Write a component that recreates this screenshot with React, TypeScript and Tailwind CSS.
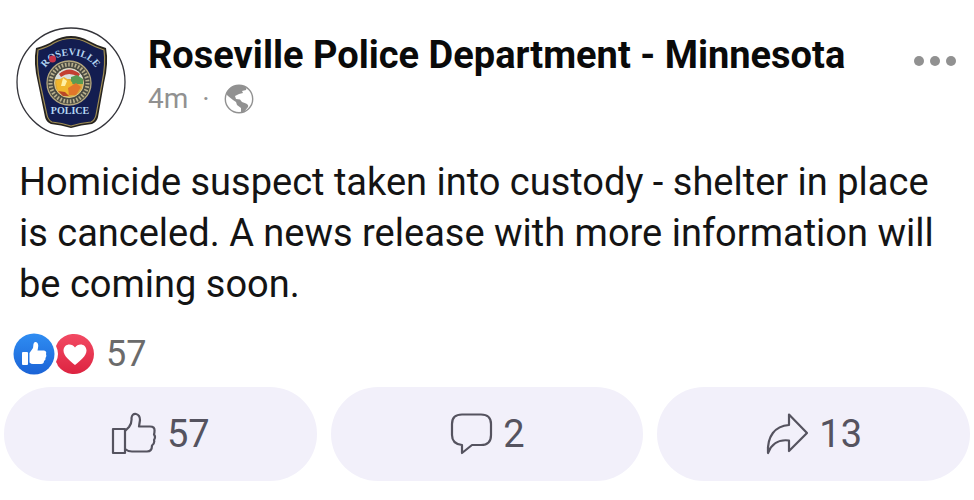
import type { ReactNode } from "react"

const Avatar = () => {
    return <svg viewBox="0 0 110 110" className="size-[110px] shrink-0" role="img" aria-label="Roseville Police badge">
        <defs>
            <path id="arch" d="M27 47C33 22 76 22 82 47" />
        </defs>
        <circle cx="55" cy="55" r="54" fill="#fff" stroke="#34343a" strokeWidth="1.3" />
        <path d="M20 21Q31 18 37 14Q55 4 73 14Q80 18 90 21Q93 36 88 56L82 90Q81 95 76 97Q65 98 55 101Q45 98 35 97Q30 95 29 90L22 56Q17 36 20 21Z" fill="#26231f" />
        <path d="M22 23Q32 20 38 16Q55 7 72 16Q79 20 88 23Q90 37 86 56L80 88Q79 93 75 95Q64 96 55 99Q46 96 36 95Q32 93 31 88L24 56Q20 37 22 23Z" fill="#131d50" stroke="#a08e56" strokeWidth="1.2" />
        <text className="font-['Liberation_Serif',serif] text-[10px] font-bold" fill="#b4d6f2">
            <textPath href="#arch" startOffset="50%" textAnchor="middle">ROSEVILLE</textPath>
        </text>
        <circle cx="36.500" cy="32" r="3.500" fill="#c9344a" />
        <circle cx="53" cy="56" r="22" fill="#4a4b43" stroke="#b5a87e" strokeWidth="1.3" />
        <circle cx="53" cy="56" r="18.5" fill="none" stroke="#b9b08d" strokeWidth="4" strokeDasharray="1.6 1.7" />
        <circle cx="53" cy="56" r="14.5" fill="#d9a83c" stroke="#d8c894" strokeWidth="1" />
        <path d="M39 52a14.500 14.500 0 0 1 28 0Z" fill="#d9dfdc" />
        <path d="M43 47q10-9 21 0l-2 3q-9-6-17 0Z" fill="#c43f32" />
        <path d="M55 50l6-2 6 4v5l-12 0Z" fill="#5b9b52" />
        <path d="M40 54l8-4 8 5 2 8-7 5-9-3Z" fill="#f0b62d" />
        <path d="M47 51l4 3-2 5-4 0Z" fill="#fff0a4" />
        <path d="M52 61l8-5 5 4-5 8h-7Z" fill="#e2762b" />
        <path d="M42 64l7 1 4 4-6 0Z" fill="#b94827" />
        <text x="54" y="87" textAnchor="middle" className="font-['Liberation_Serif',serif] text-[10px] font-bold" fill="#b4d6f2">POLICE</text>
    </svg>
}

const Globe = () => {
    return <svg viewBox="0 0 30 30" className="size-[30px]" role="img" aria-label="Public">
        <circle cx="15" cy="15" r="13.700" fill="#fff" stroke="#919191" strokeWidth="1.400" />
        <path d="M2 10Q5 3 12 1.500L20 2Q23 4 22 6L18 7L19 9L15 10L11 12L12 15L16 15.500L18 18L22 19.500Q25 21 24 23L20 28L17 28.500L17 24L13 21L12 18L9 16L4 12Z" fill="#919191" />
    </svg>
}

const LikeBadge = () => {
    return <svg viewBox="0 0 42 42" className="size-[42px]" role="img" aria-label="Like">
        <defs>
            <linearGradient id="blue" x1="0" y1="0" x2="0" y2="1">
                <stop offset="0" stopColor="#2f8df2" />
                <stop offset="1" stopColor="#1b63d6" />
            </linearGradient>
        </defs>
        <circle cx="21" cy="21" r="20.500" fill="url(#blue)" />
        <rect x="9" y="19" width="6" height="13" rx="1" fill="#fff" />
        <path d="M16.500 20L20 15L20.500 11Q21 8.500 23 9Q26 10 25 15L24.500 17.500H31Q34 18 33 21Q34 23 32.500 25Q33 27 31 28Q31 31 28 31H20Q18 31 16.500 29.500Z" fill="#fff" />
    </svg>
}

const LoveBadge = () => {
    return <svg viewBox="0 0 42 42" className="-ml-px size-[42px]" role="img" aria-label="Love">
        <defs>
            <linearGradient id="red" x1="0" y1="0" x2="0" y2="1">
                <stop offset="0" stopColor="#f24a63" />
                <stop offset="1" stopColor="#dd2441" />
            </linearGradient>
        </defs>
        <path d="M4 9A20 20 0 1 1 4 33Q3 30 2 29Q4 25 4 21Q4 17 2 13Z" fill="url(#red)" />
        <path d="M21 32C16 28 9.500 23 9.500 17.500C9.500 10.500 18 9.500 21 14.500C24 9.500 32.500 10.500 32.500 17.500C32.500 23 26 28 21 32Z" fill="#fff" />
    </svg>
}

const ThumbIcon = () => {
    return <svg viewBox="0 0 46 44" className="h-11 w-[46px]" fill="none" stroke="#55535f" strokeWidth="2.2" strokeLinejoin="round" aria-hidden="true">
        <path d="M2 17H14V41H2Z" />
        <path d="M14 19L18 15Q21 11 20.500 6Q21 1.500 25 2Q29 3 29 8L28 14.500H39Q44 14.500 43.500 19Q43.500 21 43 22.500Q45 25 43 28Q44 31 41 33.500Q41 39.500 36 39.500H21Q17 39.500 14 37" />
    </svg>
}

const CommentIcon = () => {
    return <svg viewBox="0 0 44 44" className="size-11" fill="none" stroke="#55535f" strokeWidth="2.2" strokeLinejoin="round" aria-hidden="true">
        <path d="M13 2.500H32Q42 2.500 42 12V23Q42 33 32 33H23L13 41V33Q3 32 3 23V12Q3 2.500 13 2.500Z" />
    </svg>
}

const ShareIcon = () => {
    return <svg viewBox="0 0 44 44" className="size-11" fill="none" stroke="#55535f" strokeWidth="2.2" strokeLinejoin="round" aria-hidden="true">
        <path d="M24 2.500L42 21L24 39V28.500C13 27 6 33 3 41C2 24 10 14 24 13Z" />
    </svg>
}

const ActionButton = ({ label, count, icon }: { label: string, count: number, icon: ReactNode }) => {
    return <button aria-label={`${label} ${count}`} className="flex h-[94px] flex-1 cursor-pointer items-center justify-center gap-2.5 rounded-full bg-[#f2f0fa] text-[38px] text-[#55535f]">
        {icon}
        <span>{count}</span>
    </button>
}

export default function App() {
    return <article className="bg-white font-[Roboto,sans-serif] text-[#141414]">
        <header className="flex items-center pt-[27px] pr-3.5 pl-4">
            <Avatar />
            <div className="mb-2.5 ml-[22px] min-w-0 flex-1">
                <h1 className="text-[38px] leading-11 font-bold text-[#0a0a0a]">Roseville Police Department - Minnesota</h1>
                <div className="flex items-center text-[28px] leading-11 text-[#919191]">
                    <span>4m</span>
                    <span className="mx-3.5">·</span>
                    <Globe />
                </div>
            </div>
            <button aria-label="More options" className="mb-[42px] flex shrink-0 cursor-pointer gap-1.5 p-1">
                <span className="size-2.5 rounded-full bg-[#919191]"></span>
                <span className="size-2.5 rounded-full bg-[#919191]"></span>
                <span className="size-2.5 rounded-full bg-[#919191]"></span>
            </button>
        </header>

        <p className="px-[19px] pt-5 text-[38px] leading-[51px]">
            Homicide suspect taken into custody - shelter in place is canceled. A news release with more information will be coming soon.
        </p>

        <div className="flex items-center pt-[23px] pl-[13px] text-[36px] leading-[42px] text-[#6b6b6b]">
            <LikeBadge />
            <LoveBadge />
            <span className="ml-2.5">57</span>
        </div>

        <div className="flex gap-3.5 px-1 pt-3 pb-5">
            <ActionButton label="Like" count={57} icon={<ThumbIcon />} />
            <ActionButton label="Comment" count={2} icon={<CommentIcon />} />
            <ActionButton label="Share" count={13} icon={<ShareIcon />} />
        </div>
    </article>
}
